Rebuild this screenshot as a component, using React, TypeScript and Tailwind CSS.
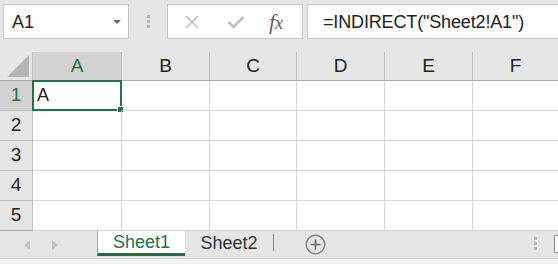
import React from 'react';

const font = { fontFamily: '"Liberation Sans", Arial, sans-serif' };

const cols = ['A', 'B', 'C', 'D', 'E', 'F'];
const colW = ['w-[89px]', 'w-[88px]', 'w-[87px]', 'w-[88px]', 'w-[88px]', 'flex-1'];
const rows = [1, 2, 3, 4, 5];

function Dots() {
    return (
        <div className="flex flex-col gap-[2px]">
            <span className="block w-[3px] h-[3px] bg-[#b4b4b4]" />
            <span className="block w-[3px] h-[3px] bg-[#b4b4b4]" />
            <span className="block w-[3px] h-[3px] bg-[#b4b4b4]" />
        </div>
    );
}

export default function App() {
    return (
        <div className="w-[558px] h-[264px] bg-[#e6e6e6] overflow-hidden flex flex-col text-[#222]" style={font}>
            {/* Formula bar */}
            <div className="h-[52px] flex items-start pt-[4px] pl-[3px] shrink-0">
                <div className="w-[126px] h-[35px] bg-white border border-[#c6c6c6] flex items-center pl-[8px] pr-[7px]">
                    <span className="text-[18px] flex-1 leading-none">A1</span>
                    <svg width="8" height="4" viewBox="0 0 8 4"><path d="M0 0h8L4 4z" fill="#6b6b6b" /></svg>
                </div>
                <div className="w-[38px] h-[35px] flex items-center justify-center">
                    <Dots />
                </div>
                <div className="w-[136px] h-[35px] bg-white border border-[#c6c6c6] flex items-center">
                    <div className="w-[46px] flex justify-center pl-[1px]">
                        <svg width="16" height="16" viewBox="0 0 16 16"><path d="M2 2l12 12M14 2L2 14" stroke="#c0c0c0" strokeWidth="1.6" /></svg>
                    </div>
                    <div className="w-[44px] flex justify-center">
                        <svg width="18" height="14" viewBox="0 0 18 14"><path d="M1.5 7l5 5L16.5 2" stroke="#c0c0c0" strokeWidth="2.6" fill="none" /></svg>
                    </div>
                    <div className="flex-1 flex justify-center pr-[8px]">
                        <span className="text-[22px] italic text-[#5f5f5f] leading-none" style={{ fontFamily: '"Liberation Serif", serif' }}>
                            f<span className="text-[18px]">x</span>
                        </span>
                    </div>
                </div>
                <div className="ml-[4px] flex-1 h-[35px] bg-white border border-r-0 border-[#c6c6c6] flex items-center pl-[15px]">
                    <span className="text-[18px] tracking-[-0.15px] leading-none">=INDIRECT("Sheet2!A1")</span>
                </div>
            </div>

            {/* Grid */}
            <div className="flex flex-col bg-white shrink-0">
                <div className="h-[29px] flex bg-[#e6e6e6] border-b border-[#ababab]">
                    <div className="w-[33px] border-r border-[#bfbfbf] relative">
                        <svg className="absolute right-[3px] bottom-[3px]" width="22" height="22" viewBox="0 0 22 22"><path d="M22 0V22H0z" fill="#b4b4b4" /></svg>
                    </div>
                    {cols.map((c, i) => (
                        <div
                            key={c}
                            className={`${colW[i]} flex items-center justify-center text-[19px] ${i === 0 ? 'bg-[#d2d2d2] text-[#217346]' : ''} ${i < 5 ? 'border-r border-[#bfbfbf]' : ''}`}
                        >
                            {c}
                        </div>
                    ))}
                </div>
                {rows.map((r) => (
                    <div key={r} className="h-[30px] flex">
                        <div className={`w-[33px] flex items-center justify-center text-[19px] border-r border-b border-[#bfbfbf] ${r === 1 ? 'bg-[#d2d2d2] text-[#217346]' : 'bg-[#e6e6e6]'}`}>
                            {r}
                        </div>
                        {cols.map((c, i) => (
                            <div key={c} className={`${colW[i]} border-b border-[#d4d4d4] ${i < 5 ? 'border-r' : ''} relative`}>
                                {r === 1 && i === 0 && (
                                    <div className="absolute -left-[1px] -top-[1px] -right-[1px] -bottom-[1px] border-2 border-[#217346] flex items-center pl-[3px] text-[18px]">
                                        A
                                        <span className="absolute -right-[4px] -bottom-[4px] w-[7px] h-[7px] bg-[#217346] border border-white" />
                                    </div>
                                )}
                            </div>
                        ))}
                    </div>
                ))}
            </div>

            {/* Sheet tabs */}
            <div className="h-[28px] flex items-stretch border-t border-[#a5a5a5] bg-[#e6e6e6] shrink-0 -mt-[1px]">
                <div className="w-[97px] flex items-center pl-[24px] gap-[22px]">
                    <svg width="6" height="10" viewBox="0 0 6 10"><path d="M6 0V10L0 5z" fill="#c4c4c4" /></svg>
                    <svg width="6" height="10" viewBox="0 0 6 10"><path d="M0 0V10L6 5z" fill="#c4c4c4" /></svg>
                </div>
                <div className="w-[88px] h-[25px] bg-white border-l border-[#a5a5a5] border-b-[3px] border-b-[#217346] flex items-center justify-center text-[#217346] text-[18px]">
                    Sheet1
                </div>
                <div className="w-[88px] h-[25px] flex items-center justify-center text-[18px] text-[#333]">
                    Sheet2
                </div>
                <div className="w-px h-[17px] bg-[#8c8c8c] self-center -mt-[4px]" />
                <div className="w-[84px] flex items-center justify-center pr-[2px] -mt-[1px]">
                    <svg width="21" height="21" viewBox="0 0 21 21">
                        <circle cx="10.5" cy="10.5" r="9.3" stroke="#787878" strokeWidth="1.3" fill="none" />
                        <path d="M10.5 5.5v10M5.5 10.5h10" stroke="#666" strokeWidth="1.6" />
                    </svg>
                </div>
                <div className="flex-1 flex items-center justify-end pr-[17px] -mt-[2px]">
                    <Dots />
                </div>
                <div className="w-[4px] h-[18px] self-center border-l border-t border-b border-[#8c8c8c] bg-white -mt-[2px]" />
            </div>
            <div className="flex-1 bg-[#f3f3f3] border-t border-[#d6d6d6]" />
        </div>
    );
}
